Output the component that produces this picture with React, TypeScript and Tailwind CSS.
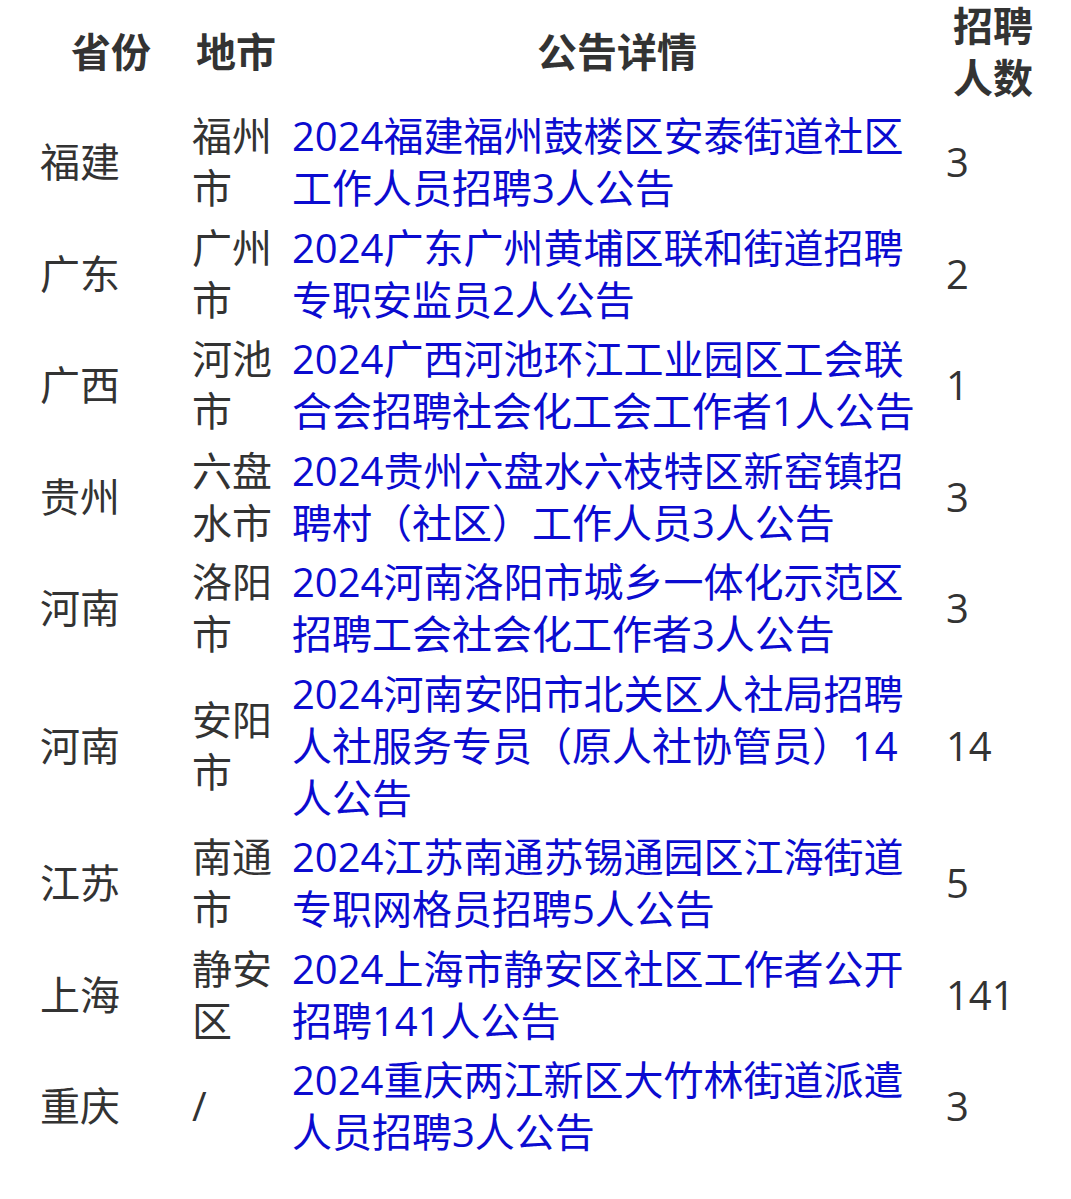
import React from "react";

const rows: [string, string, string, string][] = [
  ["福建", "福州市", "2024福建福州鼓楼区安泰街道社区工作人员招聘3人公告", "3"],
  ["广东", "广州市", "2024广东广州黄埔区联和街道招聘专职安监员2人公告", "2"],
  ["广西", "河池市", "2024广西河池环江工业园区工会联合会招聘社会化工会工作者1人公告", "1"],
  ["贵州", "六盘水市", "2024贵州六盘水六枝特区新窑镇招聘村（社区）工作人员3人公告", "3"],
  ["河南", "洛阳市", "2024河南洛阳市城乡一体化示范区招聘工会社会化工作者3人公告", "3"],
  ["河南", "安阳市", "2024河南安阳市北关区人社局招聘人社服务专员（原人社协管员）14人公告", "14"],
  ["江苏", "南通市", "2024江苏南通苏锡通园区江海街道专职网格员招聘5人公告", "5"],
  ["上海", "静安区", "2024上海市静安区社区工作者公开招聘141人公告", "141"],
  ["重庆", "/", "2024重庆两江新区大竹林街道派遣人员招聘3人公告", "3"],
];

export default function App() {
  return (
    <div
      className="w-[1071px] min-h-[1199px] bg-white text-[#333333] text-[40px] leading-[52px]"
      style={{ fontFamily: '"Open Sans", "Noto Sans CJK SC", sans-serif' }}
    >
      <div className="grid grid-cols-[152px_100px_656px_1fr] pl-[40px]">
        <div className="flex items-center justify-center pr-[10px] font-bold pb-[3px]">省份</div>
        <div className="flex items-center justify-center pr-[12px] font-bold pb-[3px]">地市</div>
        <div className="flex items-center justify-center pr-[6px] font-bold pb-[3px]">公告详情</div>
        <div className="flex items-center pb-[3px]">
          <div className="w-[90px] text-center font-bold">招聘人数</div>
        </div>
        {rows.map((r, i) => (
          <React.Fragment key={i}>
            <div className="flex items-center pt-[3px] pb-[4.5px]">{r[0]}</div>
            <div className="flex items-center pt-[3px] pb-[4.5px]">
              <div className="w-[88px]">{r[1]}</div>
            </div>
            <div className="pt-[3px] pb-[4.5px] pr-[16px]">
              <a className="text-[#0b0bd0]">{r[2]}</a>
            </div>
            <div className="flex items-center pt-[3px] pb-[4.5px] -ml-[2px]">{r[3]}</div>
          </React.Fragment>
        ))}
      </div>
    </div>
  );
}
